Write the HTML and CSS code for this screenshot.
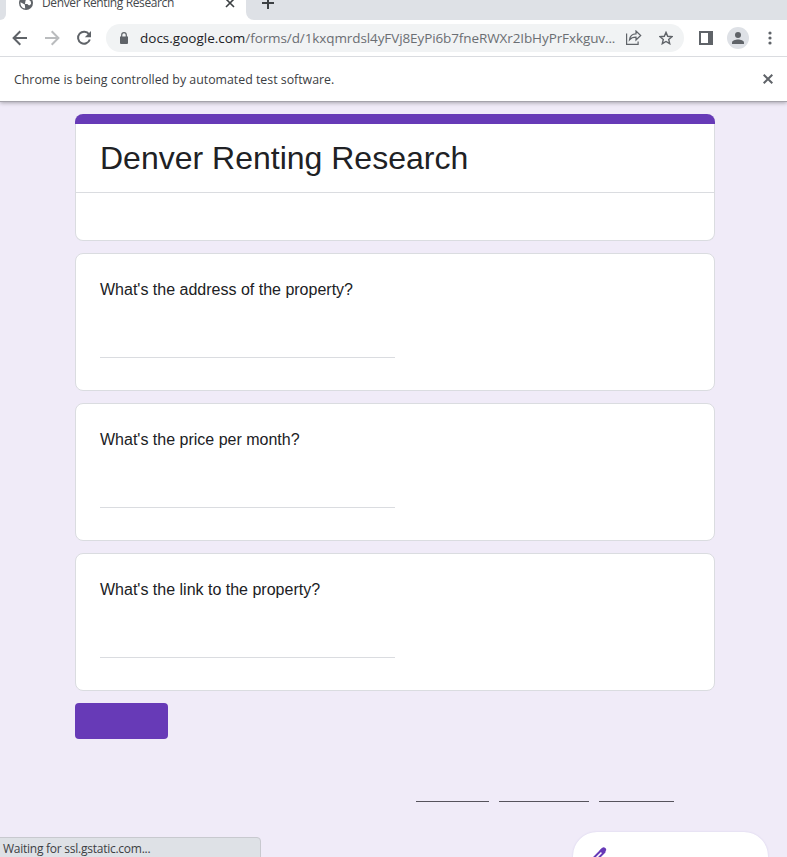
FILE: index.html
```html
<!DOCTYPE html>
<html lang="en">
<head>
<meta charset="utf-8">
<title>Denver Renting Research</title>
<link rel="stylesheet" href="styles.css">
</head>
<body>
<div class="window">
  <header class="chrome">
    <div class="tabs">
      <div class="strip-left"></div>
      <div class="tab">
        <svg class="globe" width="14" height="14" viewBox="0 0 14 14"><circle cx="7" cy="7" r="7" fill="#5f6368"/><path d="M1.500 6.200l4.300 2.300.4 3.900C3.200 12.300 1.300 9.500 1.500 6.200zM6.500 4.500l2.500-1.500 2.800 2.500.3 2.500-2 1.500-1.800-1.500H6z" fill="#fff"/></svg>
        <span class="tab-title">Denver Renting Research</span>
        <svg class="tab-close" width="10" height="10" viewBox="0 0 10 10"><path d="M1 1l8 8M9 1L1 9" stroke="#3c4043" stroke-width="1.600"/></svg>
      </div>
      <div class="strip-right"><svg width="12" height="12" viewBox="0 0 12 12"><path d="M6 0v12M0 6h12" stroke="#3c4043" stroke-width="2"/></svg></div>
    </div>
    <div class="toolbar">
      <svg class="back" width="16" height="16" viewBox="0 0 16 16"><path d="M15 8H2M8.300 1.300L1.600 8l6.700 6.700" fill="none" stroke="#5f6368" stroke-width="2"/></svg>
      <svg class="forward" width="16" height="16" viewBox="0 0 16 16"><path d="M1 8h13M7.700 1.300L14.400 8l-6.700 6.700" fill="none" stroke="#babcbe" stroke-width="2"/></svg>
      <svg class="reload" width="16" height="16" viewBox="0 0 16 16"><path d="M13 4.300A6 6 0 1 0 13.800 9.500" fill="none" stroke="#5f6368" stroke-width="2"/><path d="M15 1v6.200H8.800z" fill="#5f6368"/></svg>
      <div class="address">
        <svg class="lock" width="8" height="12" viewBox="0 0 8 12"><path d="M0 4.500h8V11a1 1 0 0 1-1 1H1a1 1 0 0 1-1-1z" fill="#5f6368"/><path d="M1.700 5V3a2.300 2.300 0 0 1 4.600 0v2" fill="none" stroke="#5f6368" stroke-width="1.200"/></svg>
        <span class="url"><b>docs.google.com</b>/forms/d/1kxqmrdsl4yFVj8EyPi6b7fneRWXr2IbHyPrFxkguv...</span>
        <svg class="share" width="16" height="15" viewBox="0 0 16 15"><path d="M.6 3.500v10.900h11.500v-3M3.500 9.800C4 6 6.300 3.800 10 3.800V1l4.700 4.500L10 10V7.200C7 7.200 5 8 3.500 9.800z" fill="none" stroke="#5f6368" stroke-width="1.200"/></svg>
        <svg class="star" width="14" height="14" viewBox="0 0 14 14"><path d="M7 1.400l1.700 3.900 4.200.4-3.200 2.800 1 4.200L7 10.500l-3.700 2.200 1-4.200L1.100 5.700l4.200-.4z" fill="none" stroke="#5f6368" stroke-width="1.400"/></svg>
      </div>
      <svg class="panel" width="14" height="14" viewBox="0 0 14 14"><path d="M0 0h14v14H0zM2 2v10h7V2z" fill="#5f6368" fill-rule="evenodd"/></svg>
      <svg class="avatar" width="22" height="22" viewBox="0 0 22 22"><circle cx="11" cy="11" r="11" fill="#dee1e6"/><circle cx="11" cy="8" r="3" fill="#5f6368"/><path d="M5 17v-1.500c0-2 3.500-3 6-3s6 1 6 3V17z" fill="#5f6368"/></svg>
      <svg class="more" width="4" height="14" viewBox="0 0 4 14"><g fill="#5f6368"><circle cx="2" cy="2" r="1.600"/><circle cx="2" cy="7" r="1.600"/><circle cx="2" cy="12" r="1.600"/></g></svg>
    </div>
    <div class="infobar">
      <span class="notice">Chrome is being controlled by automated test software.</span>
      <svg width="10" height="10" viewBox="0 0 10 10"><path d="M.7.7l8.600 8.600M9.300.7L.7 9.300" stroke="#5f6368" stroke-width="2"/></svg>
    </div>
  </header>
  <main class="page">
    <section class="card title-card">
      <h1>Denver Renting Research</h1>
    </section>
    <section class="card question"><h2>What's the address of the property?</h2><div class="answer"></div></section>
    <section class="card question"><h2>What's the price per month?</h2><div class="answer"></div></section>
    <section class="card question"><h2>What's the link to the property?</h2><div class="answer"></div></section>
    <div class="submit"></div>
    <div class="links"><i class="report"></i><i class="terms"></i><i class="privacy"></i></div>
  </main>
  <div class="status">Waiting for ssl.gstatic.com...</div>
  <div class="edit"><svg width="18" height="18" viewBox="0 0 18 18"><path d="M2.500 15.500l.8-3.300L13 2.500l2.500 2.500-9.700 9.700z" fill="none" stroke="#673ab7" stroke-width="2" stroke-linejoin="round"/><path d="M10.500 3.600L13 1.100a2.200 2.200 0 0 1 3.300 0 2.200 2.200 0 0 1 0 3.300l-2.500 2.500z" fill="#673ab7"/></svg></div>
</div>
</body>
</html>
```
FILE: styles.css
```css
* { box-sizing: border-box; }
body { margin: 0; font-family: "Open Sans", "Noto Sans", sans-serif; }
svg { display: block; flex: none; }
.window { position: relative; width: 787px; height: 857px; overflow: hidden; background: #f0ebf8; }
.chrome { position: relative; height: 102px; background: #fff; border-bottom: 1px solid #a5a3ab; box-shadow: 0 1px 4px rgba(0,0,0,.3); }
.tab-title, .url, .notice, .status { white-space: nowrap; }
.tabs { display: flex; height: 20px; }
.strip-left { width: 6px; background: #dee1e6; border-bottom-right-radius: 8px; }
.tab { display: flex; width: 240px; padding-left: 13px; }
.globe { margin-top: -4px; }
.tab-title { width: 180px; margin: -6px 0 0 9px; font-size: 12px; line-height: 18px; letter-spacing: -.38px; color: #45484c; }
.tab-close { margin: -2px 0 0 3px; }
.strip-right { flex: 1; padding: 0 0 0 16px; background: #dee1e6; border-bottom-left-radius: 8px; }
.strip-right svg { margin-top: -3px; }
.toolbar { display: flex; align-items: center; height: 37px; padding: 0 15px 1px 12px; border-bottom: 1px solid #dadce0; }
.forward, .reload { margin-left: 16px; }
.address { display: flex; align-items: center; width: 578px; height: 28px; margin-left: 14px; padding-left: 14px; border-radius: 14px; background: #f1f3f4; }
.url { width: 478px; margin-left: 12px; font-size: 13.500px; line-height: 20px; letter-spacing: -.1px; color: #6b6e73; }
.url b { font-weight: 400; letter-spacing: 0; color: #202124; }
.share { margin-left: 8px; }
.star { margin-left: 17px; }
.panel { margin-left: 15px; }
.avatar { margin-left: 14px; }
.more { margin-left: 19px; }
.infobar { display: flex; align-items: center; justify-content: space-between; height: 44px; padding: 0 14px; }
.notice { font-size: 12.350px; color: #3c4043; }
.page { width: 640px; margin: 12px 0 0 75px; }
.card { margin-bottom: 12px; border: 1px solid #dadce0; border-radius: 8px; background: #fff; }
.title-card { position: relative; height: 127px; border-top: 0; }
.title-card::before { content: ""; position: absolute; top: 0; left: -1px; right: -1px; height: 10px; border-radius: 8px 8px 0 0; background: #673ab7; }
h1 { height: 79px; margin: 0; padding: 24px 24px 0; border-bottom: 1px solid #dadce0; font: 400 32px/40px "Liberation Sans", sans-serif; color: #202124; white-space: nowrap; }
.question { height: 138px; padding: 24px; }
h2 { margin: 0; font: 400 16px/24px "Liberation Sans", sans-serif; color: #202124; }
.answer { width: 295px; height: 56px; border-bottom: 1px solid #dadce0; }
.submit { width: 93px; height: 36px; border-radius: 4px; background: #673ab7; }
.links { display: flex; gap: 10px; margin: 62px 0 0 341px; }
.links i { height: 1px; background: #56535c; }
.report { width: 73px; }
.terms { width: 90px; }
.privacy { width: 75px; }
.status { position: absolute; left: -1px; top: 837px; width: 262px; height: 24px; padding: 2px 0 0 3px; border: 1px solid #c8c9cf; border-top-right-radius: 4px; background: #dee1e6; font-size: 12px; line-height: 18px; letter-spacing: -.25px; color: #3c4043; }
.edit { position: absolute; left: 573px; top: 832px; width: 195px; height: 48px; padding: 15px 0 0 16px; border-radius: 24px; background: #fff; box-shadow: 0 0 2px rgba(103,90,183,.2); }
```
